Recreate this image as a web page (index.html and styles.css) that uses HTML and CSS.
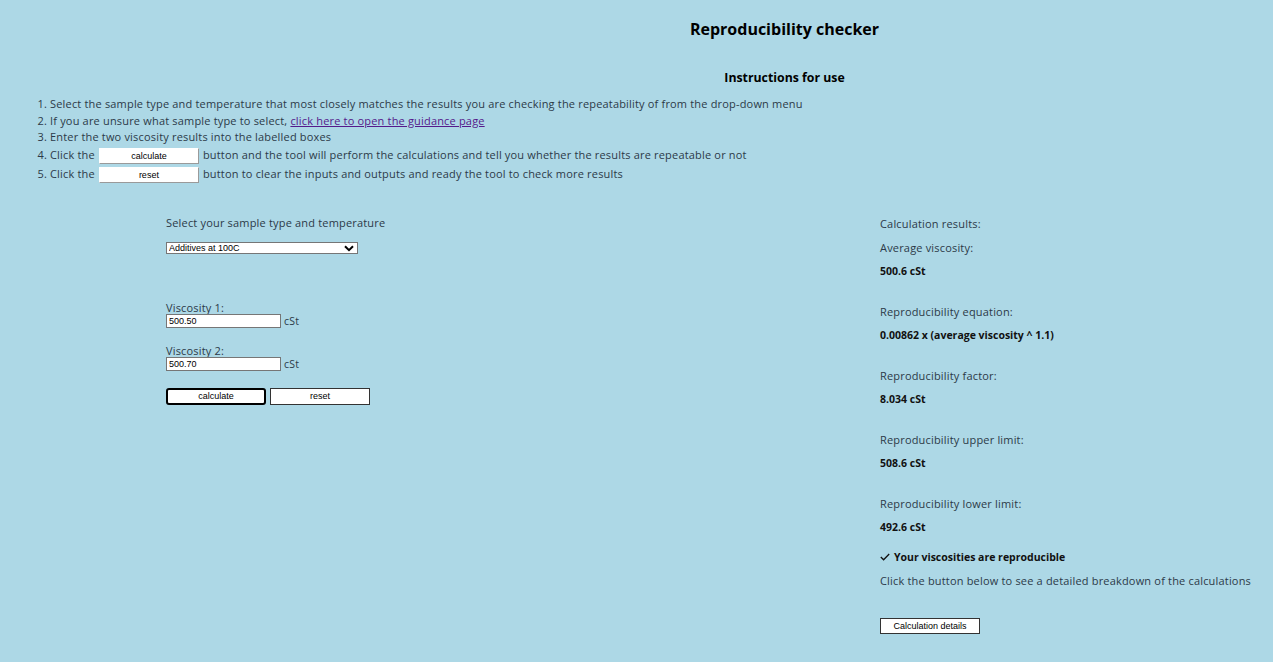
FILE: index.html
```html
<!DOCTYPE html>
<html lang="en">
<head>
<meta charset="utf-8">
<title>Reproducibility checker</title>
<link rel="stylesheet" href="styles.css">
</head>
<body>
<header class="heading">
  <h1 class="title">Reproducibility checker</h1>
  <h2 class="subtitle">Instructions for use</h2>
</header>
<ol class="steps">
  <li>Select the sample type and temperature that most closely matches the results you are checking the repeatability of from the drop-down menu</li>
  <li>If you are unsure what sample type to select, <a class="link" href="#">click here to open the guidance page</a></li>
  <li>Enter the two viscosity results into the labelled boxes</li>
  <li class="step-btn">Click the <span class="demo-btn">calculate</span> button and the tool will perform the calculations and tell you whether the results are repeatable or not</li>
  <li class="step-btn last">Click the <span class="demo-btn">reset</span> button to clear the inputs and outputs and ready the tool to check more results</li>
</ol>
<main class="tool">
  <section class="inputs">
    <p class="prompt">Select your sample type and temperature</p>
    <div class="select-wrap">
      <select class="sample-select">
        <option>Additives at 100C</option>
      </select>
      <svg class="chev" width="10" height="7" viewBox="0 0 10 7"><path d="M1 1.2 L5 5.2 L9 1.2" fill="none" stroke="#000" stroke-width="2"/></svg>
    </div>
    <label class="field-label">Viscosity 1:</label>
    <div class="field"><input class="visc" type="text" value="500.50"><span class="unit">cSt</span></div>
    <label class="field-label second">Viscosity 2:</label>
    <div class="field"><input class="visc" type="text" value="500.70"><span class="unit">cSt</span></div>
    <div class="actions">
      <button class="btn btn-focus">calculate</button>
      <button class="btn">reset</button>
    </div>
  </section>
  <section class="results">
    <p class="line">Calculation results:</p>
    <div class="group first">
      <p class="line">Average viscosity:</p>
      <p class="line value">500.6 cSt</p>
    </div>
    <div class="group">
      <p class="line">Reproducibility equation:</p>
      <p class="line value">0.00862 x (average viscosity ^ 1.1)</p>
    </div>
    <div class="group">
      <p class="line">Reproducibility factor:</p>
      <p class="line value">8.034 cSt</p>
    </div>
    <div class="group">
      <p class="line">Reproducibility upper limit:</p>
      <p class="line value">508.6 cSt</p>
    </div>
    <div class="group">
      <p class="line">Reproducibility lower limit:</p>
      <p class="line value">492.6 cSt</p>
    </div>
    <p class="line verdict"><svg class="tick" width="10" height="8" viewBox="0 0 10 8"><path d="M0.8 4 L3.6 6.8 L9.2 1" fill="none" stroke="#111" stroke-width="1.3"/></svg>Your viscosities are reproducible</p>
    <p class="line note">Click the button below to see a detailed breakdown of the calculations</p>
    <button class="btn details">Calculation details</button>
  </section>
</main>
</body>
</html>
```
FILE: styles.css
```css
html, body {
  margin: 0;
  padding: 0;
}
body {
  background: #add8e6;
  color: #2c3a48;
  font-family: "Open Sans", "Liberation Sans", sans-serif;
  font-size: 11px;
  letter-spacing: 0.18px;
  width: 1273px;
  height: 662px;
  overflow: hidden;
}
.heading {
  padding-left: 296px;
  text-align: center;
  color: #000;
}
.title {
  margin: 0;
  padding-top: 19px;
  font-size: 16px;
  line-height: 20px;
  font-weight: 700;
  letter-spacing: 0;
}
.subtitle {
  margin: 31px 0 0;
  font-size: 12.3px;
  line-height: 16px;
  font-weight: 700;
  letter-spacing: 0;
}
.steps {
  margin: 10px 0 0;
  padding-left: 50px;
}
.steps li {
  line-height: 16.5px;
}
.steps li.step-btn {
  line-height: 18px;
}
.steps li.last {
  line-height: 20px;
}
.link {
  color: #551a8b;
}
.demo-btn {
  display: inline-block;
  box-sizing: border-box;
  width: 100px;
  height: 16px;
  line-height: 15px;
  vertical-align: middle;
  background: #fff;
  border: 1px solid #fff;
  border-right-color: #9a9a9a;
  border-bottom-color: #9a9a9a;
  font-family: "Liberation Sans", Arial, sans-serif;
  font-size: 9px;
  letter-spacing: 0;
  color: #000;
  text-align: center;
  margin: 0 1px 0 1px;
}
.tool {
  display: grid;
  grid-template-columns: 714px 1fr;
  padding-left: 166px;
  margin-top: 31px;
}
.inputs, .results {
  display: flex;
  flex-direction: column;
  align-items: flex-start;
}
.prompt {
  margin: 0;
  line-height: 16px;
}
.select-wrap {
  position: relative;
  margin-top: 11px;
}
.sample-select {
  appearance: none;
  -webkit-appearance: none;
  box-sizing: border-box;
  width: 192px;
  height: 12px;
  padding: 0 0 0 2px;
  margin: 0;
  border: 1px solid #767676;
  border-radius: 0;
  background: #fff;
  color: #000;
  font-family: "Liberation Sans", Arial, sans-serif;
  font-size: 9px;
  line-height: 10px;
  display: block;
}
.chev {
  position: absolute;
  right: 4px;
  top: 3px;
}
.field-label {
  margin-top: 47px;
  line-height: 13px;
}
.field-label.second {
  margin-top: 16px;
}
.field {
  display: flex;
  align-items: center;
}
.visc {
  box-sizing: border-box;
  width: 115px;
  height: 14px;
  margin: 0;
  padding: 0 2px;
  border: 1px solid #767676;
  background: #fff;
  color: #000;
  font-family: "Liberation Sans", Arial, sans-serif;
  font-size: 9px;
}
.unit {
  margin-left: 3px;
  font-size: 10.5px;
}
.actions {
  display: flex;
  gap: 4px;
  margin-top: 17px;
}
.btn {
  box-sizing: border-box;
  width: 100px;
  height: 17px;
  margin: 0;
  padding: 0;
  background: #fff;
  border: 1px solid #333;
  border-radius: 0;
  font-family: "Liberation Sans", Arial, sans-serif;
  font-size: 9px;
  letter-spacing: 0;
  color: #000;
}
.btn-focus {
  border: 2px solid #000;
  border-radius: 3px;
}
.results .line {
  margin: 0;
  line-height: 16px;
}
.results {
  margin-top: 1px;
}
.group {
  margin-top: 25px;
}
.group.first {
  margin-top: 8px;
}
.value {
  font-weight: 700;
  font-size: 10.5px;
  color: #111;
  margin-top: 7px !important;
  letter-spacing: 0;
}
.verdict {
  margin-top: 14px !important;
  font-weight: 700;
  font-size: 10.5px;
  color: #111;
  letter-spacing: 0;
  display: flex;
  align-items: center;
}
.tick {
  margin-right: 4px;
}
.note {
  margin-top: 8px !important;
}
.details {
  margin-top: 29px;
  height: 16px;
  border: 1px solid #333;
}
```
